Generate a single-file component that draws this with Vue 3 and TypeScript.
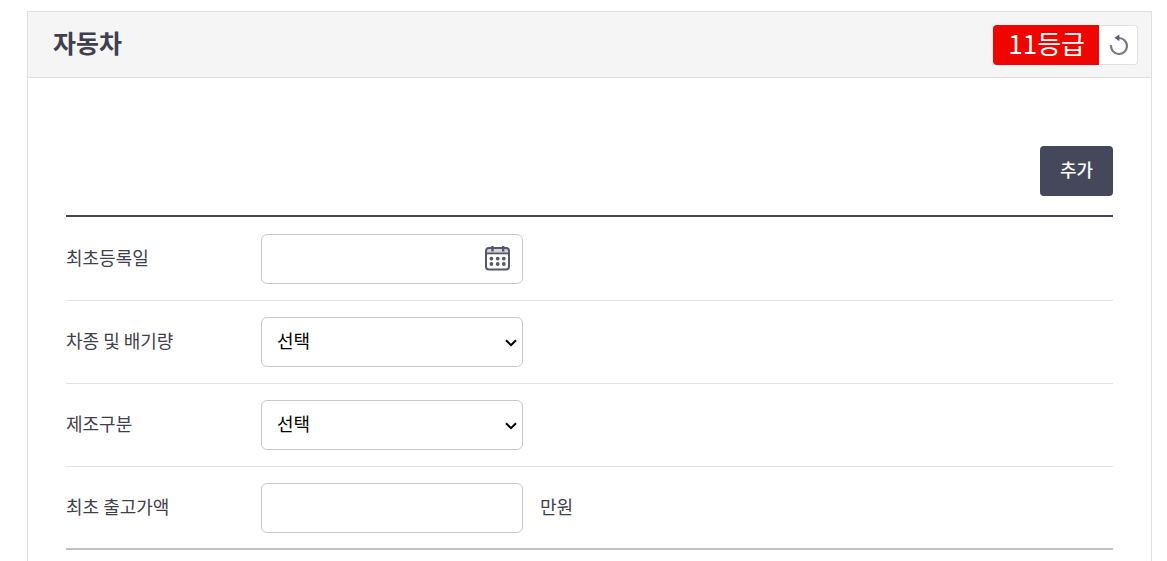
<script setup lang="ts">
import { ref } from 'vue'

const registeredOn = ref('')
const carType = ref('')
const maker = ref('')
const price = ref('')

function reset(): void {
  registeredOn.value = ''
  carType.value = ''
  maker.value = ''
  price.value = ''
}
</script>

<template>
  <main class="page">
    <section class="card">
      <header class="card-head">
        <h2 class="title">자동차</h2>
        <div class="grade">
          <span class="badge">11등급</span>
          <button class="reset" type="button" aria-label="초기화" @click="reset">
            <svg width="20" height="22" viewBox="0 0 20 22" fill="none">
              <path d="M3 11.2A8 8 0 1 0 11 4H9" stroke="#77798a" stroke-width="2.2" />
              <path d="M11.4 0.4V7.2L6.4 3.8Z" fill="#5c5e70" />
            </svg>
          </button>
        </div>
      </header>

      <form class="body" @submit.prevent>
        <div class="actions">
          <button class="add" type="button">추가</button>
        </div>
        <div class="rows">
          <div class="row">
            <label class="label" for="registered">최초등록일</label>
            <div class="field date">
              <input id="registered" v-model="registeredOn" class="control" type="text" />
              <button class="calendar" type="button" aria-label="달력">
                <svg width="25" height="25" viewBox="0 0 25 25" fill="none" stroke="#56576b">
                  <path d="M2 3H23V7H2Z" fill="#d4d4da" stroke="none" />
                  <rect x="1" y="2" width="23" height="21.4" rx="3" stroke-width="2" />
                  <path d="M1 7.4H24" stroke-width="1.8" />
                  <path d="M7.5 0V5.4M18.2 0V5.4" stroke-width="2.4" />
                  <path d="M6.4 12.6H6.41M12.7 12.6H12.71M18.8 12.6H18.81M6.4 18H6.41M12.7 18H12.71M18.8 18H18.81" stroke-width="3.8" stroke-linecap="round" />
                </svg>
              </button>
            </div>
          </div>
          <div class="row">
            <label class="label" for="type">차종 및 배기량</label>
            <div class="field">
              <select id="type" v-model="carType" class="control select">
                <option value="">선택</option>
              </select>
              <svg class="chevron" width="12" height="8" viewBox="0 0 12 8" fill="none">
                <path d="M1 1.2L6 6.2L11 1.2" stroke="#000" stroke-width="2" />
              </svg>
            </div>
          </div>
          <div class="row">
            <label class="label" for="maker">제조구분</label>
            <div class="field">
              <select id="maker" v-model="maker" class="control select">
                <option value="">선택</option>
              </select>
              <svg class="chevron" width="12" height="8" viewBox="0 0 12 8" fill="none">
                <path d="M1 1.2L6 6.2L11 1.2" stroke="#000" stroke-width="2" />
              </svg>
            </div>
          </div>
          <div class="row">
            <label class="label" for="price">최초 출고가액</label>
            <div class="field">
              <input id="price" v-model="price" class="control" type="text" />
            </div>
            <span class="unit">만원</span>
          </div>
        </div>
      </form>
    </section>
  </main>
</template>

<style>
body {
  margin: 0;
  background: #fff;
}
</style>

<style scoped>
.page {
  box-sizing: border-box;
  min-height: 100vh;
  padding: 11px 15px 0 27px;
  display: flex;
  flex-direction: column;
  font-family: "Noto Sans CJK KR", sans-serif;
  font-size: 18px;
  line-height: 24px;
  color: #3f404d;
}
.card {
  flex: 1;
  border: 1px solid #dfdfdf;
  border-bottom: 0;
}
.card-head {
  box-sizing: border-box;
  height: 66px;
  padding: 0 13px 0 25px;
  display: flex;
  align-items: center;
  justify-content: space-between;
  background: #f5f5f5;
  border-bottom: 1px solid #dfdfdf;
}
.title {
  margin: 0;
  padding-bottom: 6px;
  font-size: 25px;
  line-height: 36px;
  font-weight: 700;
  color: #3f404d;
}
.grade {
  display: flex;
}
.badge {
  box-sizing: border-box;
  height: 40px;
  padding: 0 14px 4px 15px;
  border-radius: 4px 0 0 4px;
  background: #ee0500;
  color: #fff;
  font-size: 26px;
  line-height: 36px;
}
.reset {
  box-sizing: border-box;
  width: 39px;
  height: 40px;
  padding: 0;
  display: flex;
  align-items: center;
  justify-content: center;
  border: 1px solid #e0e0e4;
  border-left: 0;
  border-radius: 0 4px 4px 0;
  background: #fff;
}
.body {
  padding: 68px 38px 11px;
}
.actions {
  display: flex;
  justify-content: flex-end;
  padding-bottom: 19px;
}
.add {
  width: 73px;
  height: 50px;
  padding: 0 0 4px;
  border: 0;
  border-radius: 4px;
  background: #45475b;
  color: #fff;
  font: inherit;
  font-weight: 500;
}
.rows {
  border-top: 2px solid #45475b;
  border-bottom: 2px solid #bfbfc5;
  padding-top: 1px;
}
.row {
  display: flex;
  align-items: center;
  padding: 16px 0;
  border-bottom: 1px solid #e2e2e2;
}
.row:last-child {
  padding-bottom: 15px;
  border-bottom: 0;
}
.label {
  width: 195px;
  padding-bottom: 4px;
}
.field {
  position: relative;
  width: 262px;
}
.control {
  box-sizing: border-box;
  display: block;
  width: 100%;
  height: 50px;
  padding: 0 15px 4px;
  border: 1px solid #c8c8cb;
  border-radius: 6px;
  background: #fff;
  color: #000;
  font: inherit;
}
.date .control {
  padding-right: 48px;
}
.select {
  appearance: none;
}
.calendar {
  position: absolute;
  top: 12px;
  right: 13px;
  width: 25px;
  height: 25px;
  padding: 0;
  border: 0;
  background: none;
}
.calendar svg {
  display: block;
}
.chevron {
  position: absolute;
  top: 22px;
  right: 6px;
  pointer-events: none;
}
.unit {
  padding: 0 0 4px 17px;
}
</style>
